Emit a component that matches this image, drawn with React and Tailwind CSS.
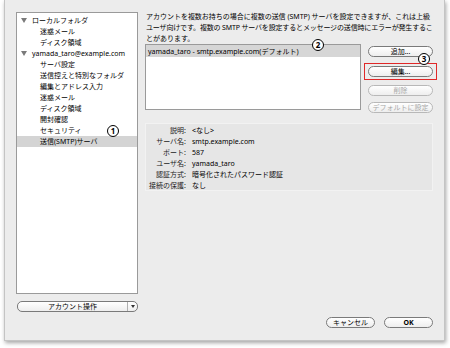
import React from 'react';

const TREE = [
  { label: 'ローカルフォルダ', level: 0 },
  { label: '迷惑メール', level: 1 },
  { label: 'ディスク領域', level: 1 },
  { label: 'yamada_taro@example.com', level: 0 },
  { label: 'サーバ設定', level: 1 },
  { label: '送信控えと特別なフォルダ', level: 1 },
  { label: '編集とアドレス入力', level: 1 },
  { label: '迷惑メール', level: 1 },
  { label: 'ディスク領域', level: 1 },
  { label: '開封確認', level: 1 },
  { label: 'セキュリティ', level: 1 },
  { label: '送信(SMTP)サーバ', level: 1, selected: true },
];

const DETAILS = [
  ['説明:', '<なし>'],
  ['サーバ名:', 'smtp.example.com'],
  ['ポート:', '587'],
  ['ユーザ名:', 'yamada_taro'],
  ['認証方式:', '暗号化されたパスワード認証'],
  ['接続の保護:', 'なし'],
];

const Mark = ({ n }) => (
  <span className="absolute flex items-center justify-center w-[12px] h-[12px] rounded-full border-[1.5px] border-black bg-white text-[8px] font-bold leading-none text-black">
    {n}
  </span>
);

const Button = ({ children, disabled, className = '' }) => (
  <div
    className={`flex items-center justify-center h-[11px] rounded-full border bg-gradient-to-b from-white to-[#eeeeee] text-[7px] leading-none ${
      disabled ? 'border-[#b8b8b8] text-[#a8a8a8]' : 'border-[#7a7a7a] text-black'
    } ${className}`}
  >
    {children}
  </div>
);

export default function App() {
  return (
    <div
      className="w-[450px] h-[348px] bg-white overflow-hidden"
      style={{ fontFamily: '"Noto Sans", "Noto Sans CJK JP", sans-serif' }}
    >
      <div className="ml-[4px] w-[441px] h-[341px] bg-[#ececec] border-x border-b border-[#c4c4c4] shadow-[1px_2px_4px_rgba(0,0,0,0.35)] flex px-[11px] pt-[11px]">
        {/* left column */}
        <div className="w-[123px] flex flex-col">
          <div className="relative mt-[1px] h-[282px] bg-white border border-[#9a9a9a] pt-[2px]">
            {TREE.map((item, i) => (
              <div
                key={i}
                className={`relative flex items-center h-[11px] text-[7px] leading-none text-black ${
                  item.selected ? 'bg-[#d4d4d4]' : ''
                } ${item.level === 0 ? 'pl-[4px]' : 'pl-[23px]'}`}
              >
                {item.level === 0 && (
                  <svg width="6" height="5" viewBox="0 0 6 5" className="mr-[5px]">
                    <path d="M0 0 L6 0 L3 5 Z" fill="#7a7a7a" />
                  </svg>
                )}
                <span className="whitespace-nowrap">{item.label}</span>
              </div>
            ))}
            <div className="absolute left-[90px] top-[112px]">
              <Mark n="1" />
            </div>
          </div>
          <div className="mt-[7px] ml-[1px] w-[121px] h-[11px] rounded-[5px] border border-[#7a7a7a] bg-gradient-to-b from-white to-[#eeeeee] flex items-center text-[7px] leading-none">
            <span className="flex-1 text-center">アカウント操作</span>
            <span className="w-[10px] h-full border-l border-[#b0b0b0] flex items-center justify-center">
              <svg width="4" height="3" viewBox="0 0 4 3">
                <path d="M0 0 L4 0 L2 3 Z" fill="#333" />
              </svg>
            </span>
          </div>
        </div>

        {/* right column */}
        <div className="ml-[7px] w-[289px] flex flex-col">
          <div className="text-[7px] leading-[11px] text-black pl-[1px] whitespace-nowrap">
            <div className="tracking-[-0.02px]">アカウントを複数お持ちの場合に複数の送信 (SMTP) サーバを設定できますが、これは上級</div>
            <div className="tracking-[-0.16px]">ユーザ向けです。複数の SMTP サーバを設定するとメッセージの送信時にエラーが発生するこ</div>
            <div>とがあります。</div>
          </div>
          <div className="flex">
            <div className="relative w-[216px] h-[66px] bg-white border border-[#9a9a9a]">
              <div className="h-[12px] bg-[#d6d6d6] flex items-center pl-[2px] text-[7px] leading-none whitespace-nowrap">
                yamada_taro - smtp.example.com(デフォルト)
              </div>
              <div className="absolute left-[166px] top-[-6px]">
                <Mark n="2" />
              </div>
            </div>
            <div className="relative ml-[7px] w-[65px] flex flex-col pt-[2px]">
              <Button>追加...</Button>
              <div className="mt-[6px] -mx-[4px] px-[3px] py-[2px] border border-[#e02828]">
                <Button>編集...</Button>
              </div>
              <Button disabled className="mt-[5px]">
                削除
              </Button>
              <Button disabled className="mt-[6px]">
                デフォルトに設定
              </Button>
              <div className="absolute left-[50px] top-[9px]">
                <Mark n="3" />
              </div>
            </div>
          </div>
          <div className="mt-[10px] h-[68px] bg-[#e6e6e6] border border-[#f2f2f2] pt-[1px]">
            {DETAILS.map(([k, v]) => (
              <div key={k} className="flex items-center h-[11px] text-[7px] leading-none">
                <span className="w-[40px] text-right text-[#222]">{k}</span>
                <span className="ml-[6px] text-black whitespace-nowrap">{v}</span>
              </div>
            ))}
          </div>
          <div className="mt-auto mb-[12px] flex justify-end">
            <Button className="w-[49px]">キャンセル</Button>
            <Button className="ml-[9px] w-[49px] font-bold">OK</Button>
          </div>
        </div>
      </div>
    </div>
  );
}
